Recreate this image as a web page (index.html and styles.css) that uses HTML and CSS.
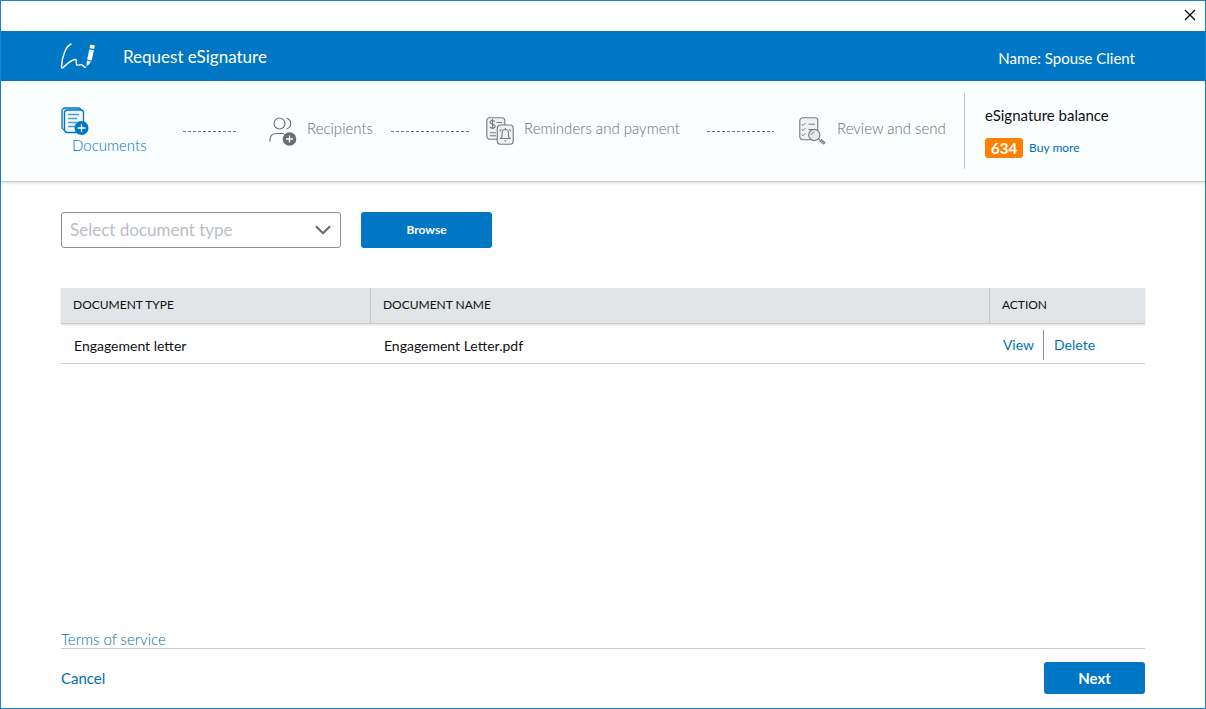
FILE: index.html
```
<!DOCTYPE html>
<html lang="en">
<head>
<meta charset="utf-8">
<meta name="viewport" content="width=device-width, initial-scale=1">
<title>Request eSignature</title>
<link rel="stylesheet" href="styles.css">
</head>
<body>
<div class="window">
  <div class="titlebar">
    <button class="close" type="button" aria-label="Close">
      <svg width="12" height="12" viewBox="0 0 12 12" fill="none" stroke="#000" stroke-width="1.2"><path d="M1 1l10 10M11 1L1 11"/></svg>
    </button>
  </div>

  <header class="header">
    <svg class="logo" width="36" height="28" viewBox="0 0 36 28" fill="none">
      <path d="M11 2C6.500 4 2 13 1.500 25C1.500 27 3 25.800 4.500 24.300C8 21 12.500 17.500 15 17.500C18 17.500 15 22 17 23C18.500 23.800 20.500 22 22 22.800C23.500 23.600 23.500 25.500 25.500 25.200" stroke="#fff" stroke-width="1.4" stroke-linecap="round" stroke-linejoin="round"/>
      <path d="M30.300 2.500l4.500.9-.7 3.500-4.500-.9zM29.300 7.300l4.600.9-2.200 10.200-4.500-1zM26.900 18.500l4.200.9-2.500 3.400-2.200 1.400z" fill="#fff"/>
    </svg>
    <h1 class="title">Request eSignature</h1>
    <span class="client">Name: Spouse Client</span>
  </header>

  <section class="progress">
    <ol class="steps">
      <li class="step step-current">
        <svg width="28" height="29" viewBox="0 0 28 29" fill="none" stroke="#0077c5">
          <rect x="1" y="1" width="19" height="22" rx="3" fill="#d4eaf7" stroke-width="1.3"/>
          <rect x="3.500" y="3" width="19" height="22.500" rx="3" fill="#f4f8fb" stroke-width="1.3"/>
          <path d="M7 7.500h11M7 11.500h9M7 15.500h11M7 19.500h7" stroke="#4c9fd4" stroke-width="1.400"/>
          <circle cx="20.500" cy="21" r="7" fill="#0077c5" stroke="none"/>
          <path d="M20.500 17v8M16.500 21h8" stroke="#fff" stroke-width="1.300"/>
        </svg>
        <span class="step-label">Documents</span>
      </li>
      <li class="line line-first" aria-hidden="true"></li>
      <li class="step">
        <svg width="28" height="30" viewBox="0 0 28 30" fill="none" stroke="#6b6c72" stroke-width="1.100">
          <circle cx="10.500" cy="7.500" r="5.500"/>
          <path d="M17.500 2.200c5.600 1.300 5.600 9.300 0 10.600M1 25.500v-1.500c0-4 2.500-6.500 6.500-6.500H15"/>
          <circle cx="20.500" cy="23" r="6.800" fill="#6b6c72" stroke="none"/>
          <path d="M20.500 19.500v7M17 23h7" stroke="#fff" stroke-width="1.300"/>
        </svg>
        <span class="step-label">Recipients</span>
      </li>
      <li class="line line-second" aria-hidden="true"></li>
      <li class="step">
        <svg width="28" height="28" viewBox="0 0 28 28" fill="none" stroke="#777a7d" stroke-width="1.100">
          <rect x=".8" y=".8" width="18" height="21.500" rx="3" fill="#f0f1f2"/>
          <path d="M9 4.500C7.500 2.800 4 3.300 4 5.300c0 2.500 5.200 1.500 5.200 4 0 2.200-4 2.400-5.400.5M6.500 2v10M10.500 5.500h5.500M4 15.700h6M4 18.700h6"/>
          <rect x="11.300" y="8" width="15.900" height="19.300" rx="3" fill="#f0f1f2"/>
          <path d="M14.500 21.500h9.600l-1.600-2v-3.200c0-5-6.400-5-6.400 0v3.200zM19.300 11v1.500M14 14.500c0-1 .6-1.800 1.400-2.300M24.600 14.500c0-1-.6-1.800-1.400-2.300M18.500 24h1.600"/>
        </svg>
        <span class="step-label">Reminders and payment</span>
      </li>
      <li class="line line-third" aria-hidden="true"></li>
      <li class="step">
        <svg width="28" height="28" viewBox="0 0 28 28" fill="none" stroke="#777a7d" stroke-width="1.100">
          <rect x=".8" y=".8" width="18" height="22" rx="3" fill="#f0f1f2"/>
          <path d="M2.800 7.500l1.200 1 2.300-2.300M2.800 12.500l1.200 1 2.300-2.300M2.800 17.700l1.200 1 2.300-2.300M9.500 7.200h6.500M9.500 12.500h5" stroke-width="1"/>
          <circle cx="15.300" cy="18" r="5.600" fill="#e7e9ea"/>
          <path d="M12.500 18a3 3 0 0 1 3-3" stroke-width=".8"/>
          <path d="M19.500 21.800l1.800 1.500"/>
          <path d="M21.300 23.300l4.500 3.300" stroke-width="3"/>
          <path d="M21.800 23.800l3.500 2.500" stroke="#c5c8ca" stroke-width=".8"/>
        </svg>
        <span class="step-label">Review and send</span>
      </li>
    </ol>
    <div class="balance">
      <span class="balance-title">eSignature balance</span>
      <div class="balance-row">
        <span class="count">634</span>
        <a class="buy" href="#">Buy more</a>
      </div>
    </div>
  </section>

  <main class="content">
    <form class="picker">
      <div class="select-wrap">
        <select class="select" aria-label="Document type">
          <option>Select document type</option>
        </select>
        <svg class="chevron" width="16" height="10" viewBox="0 0 16 10" fill="none" stroke="#6b6c72" stroke-width="2.200"><path d="M1 1.200l7 7 7-7"/></svg>
      </div>
      <button class="button browse" type="button">Browse</button>
    </form>

    <table class="documents">
      <thead>
        <tr><th class="col-type">DOCUMENT TYPE</th><th class="col-name">DOCUMENT NAME</th><th>ACTION</th></tr>
      </thead>
      <tbody>
        <tr>
          <td>Engagement letter</td>
          <td>Engagement Letter.pdf</td>
          <td><div class="actions"><a class="view" href="#">View</a><a class="delete" href="#">Delete</a></div></td>
        </tr>
      </tbody>
    </table>
  </main>

  <footer class="footer">
    <div class="terms"><a href="#">Terms of service</a></div>
    <div class="footer-row">
      <button class="cancel" type="button">Cancel</button>
      <button class="button next" type="button">Next</button>
    </div>
  </footer>
</div>
</body>
</html>
```
FILE: styles.css
```
* { box-sizing: border-box; }

body {
  margin: 0;
  font-family: Lato, "Open Sans", sans-serif;
  font-size: 14px;
  color: #111;
}

a { color: #0070b8; text-decoration: none; }

button, select { font-family: inherit; }

.window {
  display: flex;
  flex-direction: column;
  min-height: 100vh;
  border: 1px solid #1a82d2;
  background: #fff;
}

.titlebar {
  display: flex;
  justify-content: flex-end;
  align-items: center;
  height: 30px;
  padding: 0 9px 2px 0;
}

.close {
  display: flex;
  padding: 0;
  border: 0;
  background: none;
}

.header {
  display: flex;
  align-items: center;
  height: 50px;
  padding: 0 70px 0 59px;
  background: #0077c5;
  color: #fff;
}

.title {
  flex: 1;
  margin: 0 0 0 27px;
  font-size: 17px;
  font-weight: 400;
}

.client { font-size: 15px; padding-top: 3px; }

.progress {
  display: grid;
  grid-template-columns: 903fr 241fr;
  height: 101px;
  padding-left: 60px;
  background: #fafeff;
  border-bottom: 1px solid #c6cacd;
  box-shadow: 0 1px 3px rgba(0, 0, 0, .15);
}

.steps {
  display: grid;
  grid-template-columns: 122fr 86fr 122fr 95fr 221fr 92fr 165fr;
  margin: 0;
  padding: 0;
  list-style: none;
}

.step {
  display: flex;
  align-items: center;
  gap: 10px;
  color: #6b6c72;
  font-size: 15px;
  font-weight: 300;
  white-space: nowrap;
}

.step-label { padding-bottom: 6px; }

.step-current {
  flex-direction: column;
  align-items: flex-start;
  gap: 0;
  padding-top: 26px;
  color: #0077c5;
}

.step-current .step-label { padding-left: 11px; }

.line {
  align-self: center;
  height: 1px;
  background: repeating-linear-gradient(90deg, #6b6c72 0 3px, transparent 3px 5px);
}

.line-first { margin-right: 31px; }
.line-second { margin-right: 17px; }
.line-third { margin-right: 25px; }

.balance {
  display: flex;
  flex-direction: column;
  gap: 13px;
  margin: 12px 0;
  padding: 12px 0 0 20px;
  border-left: 1px solid #c6cacd;
  font-size: 15px;
  line-height: 20px;
}

.balance-row { display: flex; align-items: center; gap: 6px; }

.count {
  padding: 0 6px;
  border-radius: 3px;
  background: #ff8000;
  color: #fff;
  font-weight: 700;
}

.buy { font-size: 12px; }

.content { flex: 1; padding: 30px 60px 0; }

.picker { display: flex; gap: 20px; }

.select-wrap { position: relative; width: 280px; }

.select {
  width: 100%;
  height: 36px;
  padding: 0 40px 2px 8px;
  border: 1px solid #8d9096;
  border-radius: 3px;
  appearance: none;
  background: #fff;
  color: #babec5;
  font-size: 17px;
}

.chevron {
  position: absolute;
  top: 13px;
  right: 10px;
  pointer-events: none;
}

.button {
  border: 0;
  border-radius: 3px;
  background: #0077c5;
  color: #fff;
  font-weight: 700;
}

.browse { width: 131px; height: 36px; padding-bottom: 3px; font-size: 12px; }

.documents {
  width: 100%;
  margin-top: 40px;
  border-collapse: separate;
  border-spacing: 0;
  table-layout: fixed;
}

.documents thead { box-shadow: 0 1px 2px rgba(0, 0, 0, .15); }

.documents th {
  height: 36px;
  padding: 0 12px 2px;
  border-bottom: 1px solid #c9cdd0;
  background: #e1e5e8;
  font-size: 12px;
  font-weight: 400;
  text-align: left;
}

.documents th + th { border-left: 1px solid #c6cacd; }

.col-type { width: 28.5%; }
.col-name { width: 57.1%; }

.documents td {
  height: 40px;
  padding: 3px 13px 0;
  border-bottom: 1px solid #c6cacd;
}

.documents td + td { padding-left: 14px; }

.actions { display: flex; line-height: 30px; }

.view { padding-right: 9px; border-right: 1px solid #8d9096; }
.delete { padding-left: 10px; }

.footer { padding: 0 60px 14px; }

.terms {
  border-bottom: 1px solid #c6cacd;
  font-size: 15px;
  font-weight: 300;
  line-height: 18px;
}

.footer-row {
  display: flex;
  justify-content: space-between;
  align-items: center;
  padding-top: 13px;
}

.cancel {
  padding: 0;
  border: 0;
  background: none;
  color: #0070b8;
  font-size: 15px;
}

.next { width: 101px; height: 32px; font-size: 15px; }
```
